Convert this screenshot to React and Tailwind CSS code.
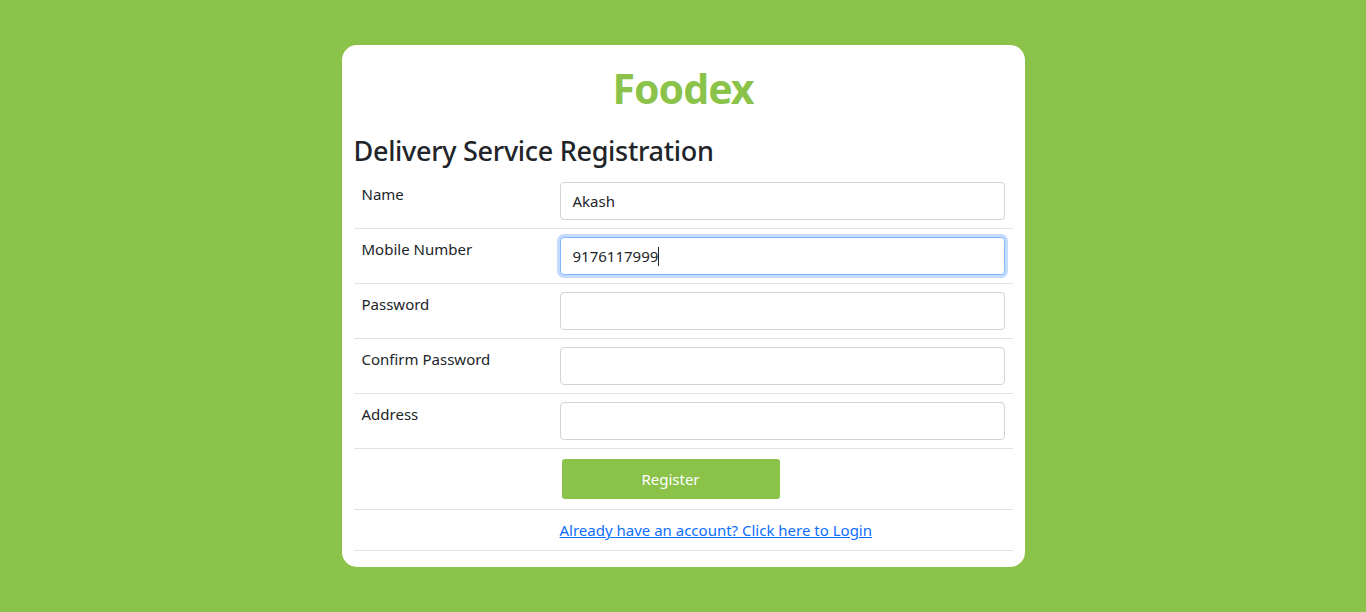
import React from "react";

const rows = [
  { label: "Name", value: "Akash" },
  { label: "Mobile Number", value: "9176117999", focused: true },
  { label: "Password", value: "" },
  { label: "Confirm Password", value: "" },
  { label: "Address", value: "" },
];

export default function App() {
  return (
    <div
      className="min-h-[612px] w-full bg-[#8bc34a] flex justify-center pt-[45px]"
      style={{ fontFamily: '"Noto Sans", sans-serif' }}
    >
      <div className="w-[683px] h-[522px] bg-white rounded-[15px] px-[12px] pt-[14px]">
        <h1 className="text-center text-[41px] leading-[58px] font-bold tracking-[-1px] text-[#8bc34a]">Foodex</h1>
        <h2 className="mt-[17px] text-[27px] leading-[34px] font-medium tracking-[-0.3px] text-[#212529]">
          Delivery Service Registration
        </h2>
        <div className="mt-[6px] text-[#212529]">
          {rows.map((r) => (
            <div key={r.label} className="flex border-b border-[#dee2e6] h-[55px] py-[8px]">
              <div className="w-[198px] px-[8px] text-[15px] leading-[24px]">{r.label}</div>
              <div className="flex-1 px-[8px]">
                <div
                  className={
                    "h-[38px] rounded-[4px] border bg-white px-[12px] flex items-center text-[15px] " +
                    (r.focused
                      ? "border-[#86b7fe] shadow-[0_0_0_3px_rgba(13,110,253,0.25)]"
                      : "border-[#ced4da]")
                  }
                >
                  <span>{r.value}</span>
                  {r.focused && <span className="w-px h-[19px] bg-[#212529]" />}
                </div>
              </div>
            </div>
          ))}
          <div className="flex border-b border-[#dee2e6] h-[61px] pt-[10px]">
            <div className="w-[198px]" />
            <div className="flex-1 px-[10px]">
              <button className="w-[218px] h-[40px] rounded-[3px] bg-[#8bc34a] text-white text-[15px]">
                Register
              </button>
            </div>
          </div>
          <div className="flex border-b border-[#dee2e6] h-[41px] items-center">
            <div className="w-[198px]" />
            <div className="flex-1 px-[8px]">
              <a href="#" className="text-[#0d6efd] underline text-[15px]">
                Already have an account? Click here to Login
              </a>
            </div>
          </div>
        </div>
      </div>
    </div>
  );
}
